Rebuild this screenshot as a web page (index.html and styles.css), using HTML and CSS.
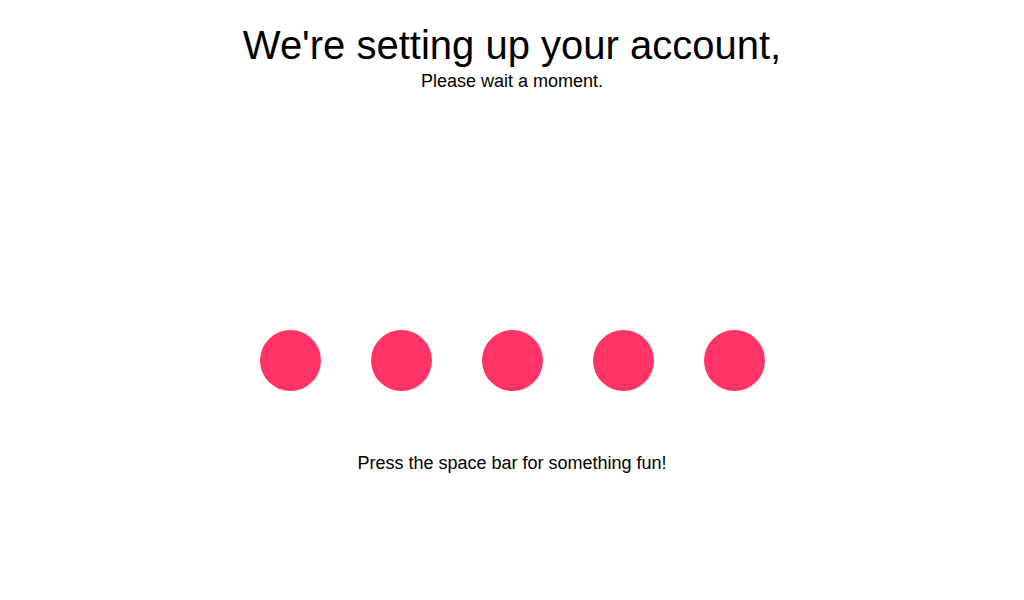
FILE: index.html
```html
<!DOCTYPE html>
<html lang="en">
<head>
<meta charset="utf-8">
<title>Setting up your account</title>
<link rel="stylesheet" href="styles.css">
</head>
<body>
<main class="page">
  <header class="intro">
    <h1 class="title">We're setting up your account,</h1>
    <p class="subtitle">Please wait a moment.</p>
  </header>
  <div class="dots">
    <span class="dot"></span>
    <span class="dot"></span>
    <span class="dot"></span>
    <span class="dot"></span>
    <span class="dot"></span>
  </div>
  <p class="hint">Press the space bar for something fun!</p>
</main>
</body>
</html>
```
FILE: styles.css
```css
html, body {
  margin: 0;
  padding: 0;
  background: #ffffff;
}
body {
  font-family: "Liberation Sans", Arial, sans-serif;
  color: #000000;
  width: 1024px;
  height: 600px;
  overflow: hidden;
}
.page {
  display: flex;
  flex-direction: column;
  align-items: center;
  padding-top: 22px;
}
.intro {
  display: flex;
  flex-direction: column;
  align-items: center;
}
.title {
  margin: 0;
  font-size: 40px;
  font-weight: normal;
  line-height: 46px;
}
.subtitle {
  margin: 3px 0 0;
  font-size: 18px;
  line-height: 21px;
}
.dots {
  display: flex;
  gap: 50px;
  margin-top: 238px;
}
.dot {
  width: 61px;
  height: 61px;
  border-radius: 50%;
  background: #ff3366;
}
.hint {
  margin: 62px 0 0;
  font-size: 18px;
  line-height: 21px;
}
```
